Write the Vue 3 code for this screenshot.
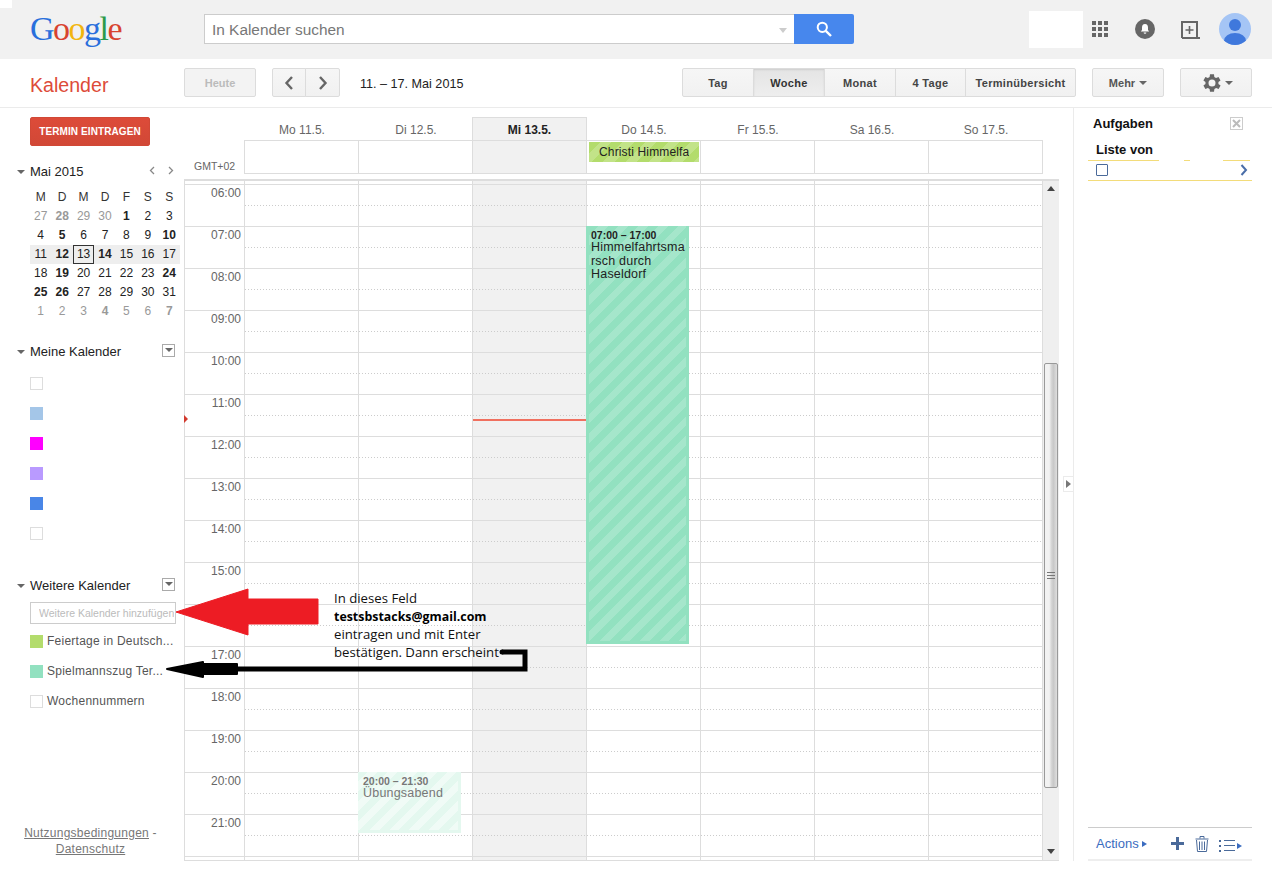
<script setup>
const letters = ['M', 'D', 'M', 'D', 'F', 'S', 'S']
const bold = new Set(['1', '5', '10', '12', '14', '19', '24', '25', '26'])
const mk = (n, cls = '') => ({ n: String(n), cls: cls + (bold.has(String(n)) && cls !== 'mut' ? ' b' : '') })
const mini = [
  [mk(27, 'mut'), { n: '28', cls: 'mut b' }, mk(29, 'mut'), mk(30, 'mut'), mk(1), mk(2), mk(3)],
  [4, 5, 6, 7, 8, 9, 10].map((n) => mk(n)),
  [11, 12, 13, 14, 15, 16, 17].map((n) => mk(n, 'wk')),
  [18, 19, 20, 21, 22, 23, 24].map((n) => mk(n)),
  [25, 26, 27, 28, 29, 30, 31].map((n) => mk(n)),
  [mk(1, 'mut'), mk(2, 'mut'), mk(3, 'mut'), { n: '4', cls: 'mut b' }, mk(5, 'mut'), mk(6, 'mut'), { n: '7', cls: 'mut b' }],
]
const myCals = ['blank', 'c1', 'c2', 'c3', 'c4', 'blank']
const days = ['Mo 11.5.', 'Di 12.5.', 'Mi 13.5.', 'Do 14.5.', 'Fr 15.5.', 'Sa 16.5.', 'So 17.5.']
const hours = ['06:00', '07:00', '08:00', '09:00', '10:00', '11:00', '12:00', '13:00', '14:00', '15:00', '16:00', '17:00', '18:00', '19:00', '20:00', '21:00']
</script>

<template>
  <div class="page">
    <header class="top">
      <div class="logo"><span class="lb">G</span><span class="lr">o</span><span class="ly">o</span><span class="lb">g</span><span class="lg">l</span><span class="lr">e</span></div>
      <div class="search">
        <div class="sfield">
          <span>In Kalender suchen</span>
          <i class="sdrop"></i>
        </div>
        <button class="sbtn">
          <svg width="16" height="16" viewBox="0 0 16 16"><circle cx="6.3" cy="6.3" r="4.6" fill="none" stroke="#fff" stroke-width="2"/><path d="M9.8 9.8 L15 15" stroke="#fff" stroke-width="2.4"/></svg>
        </button>
      </div>
      <div class="tools">
        <div class="mask"></div>
        <svg class="apps" width="16" height="16" viewBox="0 0 16 16" fill="#666"><rect width="4" height="4"/><rect x="6" width="4" height="4"/><rect x="12" width="4" height="4"/><rect y="6" width="4" height="4"/><rect x="6" y="6" width="4" height="4"/><rect x="12" y="6" width="4" height="4"/><rect y="12" width="4" height="4"/><rect x="6" y="12" width="4" height="4"/><rect x="12" y="12" width="4" height="4"/></svg>
        <svg class="bell" width="20" height="20" viewBox="0 0 20 20"><circle cx="10" cy="10" r="10" fill="#666"/><path d="M10 5 C7.8 5 7 6.8 7 8.6 V11 L5.8 12.6 H14.2 L13 11 V8.6 C13 6.8 12.2 5 10 5Z M8.6 13.4 H11.4 A1.4 1.4 0 0 1 8.6 13.4Z" fill="#fff"/></svg>
        <svg class="addbox" width="20" height="20" viewBox="0 0 20 20" fill="none" stroke="#666" stroke-width="2"><path d="M1 18 V2 H16 V18 H1 M16 18 H19"/><path d="M8.5 6 V14 M4.5 10 H12.5" stroke-width="1.6"/></svg>
        <svg class="avatar" width="32" height="32" viewBox="0 0 32 32"><defs><clipPath id="av"><circle cx="16" cy="16" r="16"/></clipPath></defs><circle cx="16" cy="16" r="16" fill="#a5c5f5"/><g clip-path="url(#av)" fill="#3f78dc"><circle cx="16" cy="12" r="6"/><ellipse cx="16" cy="28" rx="11" ry="8"/></g></svg>
      </div>
    </header>

    <div class="bar">
      <div class="brand">Kalender</div>
      <button class="btn heute">Heute</button>
      <div class="group nav">
        <button class="btn"><svg width="10" height="16" viewBox="0 0 10 16"><path d="M8 2 L2.5 8 L8 14" fill="none" stroke="#666" stroke-width="2.4"/></svg></button>
        <button class="btn"><svg width="10" height="16" viewBox="0 0 10 16"><path d="M2 2 L7.5 8 L2 14" fill="none" stroke="#666" stroke-width="2.4"/></svg></button>
      </div>
      <div class="range">11. – 17. Mai 2015</div>
      <div class="group views">
        <button class="btn v1">Tag</button>
        <button class="btn v2 on">Woche</button>
        <button class="btn v3">Monat</button>
        <button class="btn v4">4 Tage</button>
        <button class="btn v5">Terminübersicht</button>
      </div>
      <button class="btn mehr">Mehr <i class="caret"></i></button>
      <button class="btn gear">
        <svg width="24" height="24" viewBox="0 0 24 24"><path fill="#666" d="M19.4 13a7.5 7.5 0 0 0 0-2l2.1-1.6-2-3.5-2.5 1a7.6 7.6 0 0 0-1.7-1L15 3.2h-4l-.4 2.7a7.6 7.6 0 0 0-1.7 1l-2.5-1-2 3.500L6.500 11a7.500 7.500 0 0 0 0 2l-2.100 1.600 2 3.500 2.500-1a7.600 7.600 0 0 0 1.700 1l.4 2.700h4l.4-2.700a7.600 7.600 0 0 0 1.700-1l2.500 1 2-3.500zM13 15.500a3.500 3.500 0 1 1 0-7 3.500 3.500 0 0 1 0 7z"/></svg>
        <i class="caret"></i>
      </button>
    </div>

    <div class="main">
      <aside class="side">
        <button class="create">TERMIN EINTRAGEN</button>

        <div class="mhead">
          <i class="tri"></i><span class="mtitle">Mai 2015</span>
          <svg class="mchev" width="6" height="9" viewBox="0 0 6 9"><path d="M5 1 L1.500 4.500 L5 8" fill="none" stroke="#888" stroke-width="1.300"/></svg>
          <svg class="mchev second" width="6" height="9" viewBox="0 0 6 9"><path d="M1 1 L4.500 4.500 L1 8" fill="none" stroke="#888" stroke-width="1.300"/></svg>
        </div>
        <div class="mini">
          <span v-for="(l, i) in letters" :key="i" class="mcell hd">{{ l }}</span>
          <template v-for="(row, r) in mini" :key="r">
            <span v-for="(d, c) in row" :key="c" class="mcell" :class="[d.cls, d.n === '13' ? 'today' : '']">{{ d.n }}</span>
          </template>
        </div>

        <div class="shead first"><i class="tri"></i><span>Meine Kalender</span><i class="ddbox"></i></div>
        <div class="clist">
          <div v-for="(c, i) in myCals" :key="i" class="citem"><i class="sq" :class="c"></i></div>
        </div>

        <div class="shead second"><i class="tri"></i><span>Weitere Kalender</span><i class="ddbox"></i></div>
        <div class="addcal"><span>Weitere Kalender hinzufügen</span></div>
        <div class="clist other">
          <div class="citem"><i class="sq c5"></i><span>Feiertage in Deutsch...</span></div>
          <div class="citem"><i class="sq c6"></i><span>Spielmannszug Ter...</span></div>
          <div class="citem"><i class="sq blank"></i><span>Wochennummern</span></div>
        </div>

        <div class="legal"><u>Nutzungsbedingungen</u> - <u>Datenschutz</u></div>
      </aside>

      <section class="cal">
        <div class="daysrow">
          <div class="gutter"></div>
          <div v-for="(d, i) in days" :key="d" class="dayhead" :class="{ cur: i === 2 }">{{ d }}</div>
        </div>
        <div class="allday">
          <div class="gutter gmt">GMT+02</div>
          <div v-for="(d, i) in days" :key="d" class="adcell" :class="{ cur: i === 2 }">
            <div v-if="i === 3" class="adevent"><span>Christi Himmelfahrt</span></div>
          </div>
        </div>

        <div class="scrollwrap">
          <div class="grid">
            <div class="timecol">
              <div class="stub"></div>
              <div v-for="h in hours" :key="h" class="tlabel">{{ h }}</div>
              <div class="laststub"></div>
            </div>
            <div v-for="(d, i) in days" :key="d" class="daycol" :class="{ cur: i === 2 }">
              <div class="stub"></div>
              <div v-for="h in hours" :key="h" class="hour"></div>
              <div class="laststub"></div>
              <div v-if="i === 2" class="nowline"></div>
              <div v-if="i === 3" class="event big">
                <div class="etime">07:00 – 17:00</div>
                <div class="etitle">Himmelfahrtsma<br>rsch durch<br>Haseldorf</div>
              </div>
              <div v-if="i === 1" class="event pale">
                <div class="etime">20:00 – 21:30</div>
                <div class="etitle">Übungsabend</div>
              </div>
            </div>
            <i class="nowmark"></i>
          </div>
          <div class="sbar">
            <i class="up"></i>
            <div class="thumb"><b></b></div>
            <i class="down"></i>
          </div>
        </div>
      </section>

      <div class="handle"><i></i></div>

      <aside class="tasks">
        <div class="thead"><span>Aufgaben</span>
          <svg class="tclose" width="13" height="13" viewBox="0 0 13 13"><rect x=".5" y=".5" width="12" height="12" fill="none" stroke="#ccc"/><path d="M3 3 L10 10 M10 3 L3 10" stroke="#bbb" stroke-width="2"/></svg>
        </div>
        <div class="tlist">Liste von</div>
        <div class="trow">
          <i class="tcheck"></i>
          <svg width="8" height="12" viewBox="0 0 8 12"><path d="M1.500 1 L6 6 L1.500 11" fill="none" stroke="#4a6ea9" stroke-width="2"/></svg>
        </div>
        <div class="tspace"></div>
        <div class="tfoot">
          <span class="tact">Actions<i class="play"></i></span>
          <svg class="tplus" width="13" height="13" viewBox="0 0 13 13"><path d="M5 0 H8 V5 H13 V8 H8 V13 H5 V8 H0 V5 H5Z" fill="#4a6a9a"/></svg>
          <svg class="ttrash" width="14" height="16" viewBox="0 0 14 16" fill="none" stroke="#4a6a9a"><path d="M.5 3 H13.500 M5 2.500 V.5 H9 V2.500 M1.500 4 L2.500 15.500 H11.500 L12.500 4"/><path d="M4.500 5.500 V14 M7 5.500 V14 M9.500 5.500 V14"/></svg>
          <span class="tlistic">
            <svg width="16" height="12" viewBox="0 0 16 12" fill="#4a6a9a"><rect y="0" width="2" height="2"/><rect y="5" width="2" height="2"/><rect y="10" width="2" height="2"/><rect x="5" y="0" width="11" height="1"/><rect x="5" y="5" width="11" height="1"/><rect x="5" y="10" width="11" height="1"/></svg>
            <i class="play"></i>
          </span>
        </div>
      </aside>

      <svg class="arrows" width="400" height="110" viewBox="0 0 400 110">
        <path d="M1 34 L73 11 V21 H143 V46 H73 V57 Z" fill="#ed1c24" stroke="#ed1c24"/>
        <path d="M327 74 H350 V91 H60" fill="none" stroke="#000" stroke-width="5"/>
        <circle cx="327" cy="74" r="2.500" fill="#000"/>
        <path d="M-8 91 L28 84 V86 H62 V96 H28 V99 Z" fill="#000" stroke="#000" stroke-width="2" stroke-linejoin="round"/>
      </svg>
      <div class="note">In dieses Feld<br><b>testsbstacks@gmail.com</b><br>eintragen und mit Enter<br>bestätigen. Dann erscheint</div>
    </div>
    <div class="corner"></div>
  </div>
</template>

<style>
html, body { margin: 0; background: #fff; }
</style>

<style scoped>
* { box-sizing: border-box; }
i { display: block; }
.page { position: relative; width: 1272px; height: 889px; overflow: hidden; background: #fff; font-family: "Liberation Sans", Arial, sans-serif; color: #222; font-size: 12px; }
.corner { position: absolute; left: 0; top: 0; width: 12px; height: 8px; background: #fff; }

.top { height: 59px; background: #f1f1f1; display: flex; align-items: flex-start; padding-left: 30px; }
.logo { width: 174px; padding-top: 9px; font-family: "Liberation Serif", serif; font-size: 34px; line-height: 40px; letter-spacing: -1.500px; }
.lb { color: #2a6fdc; } .lr { color: #d8432f; } .ly { color: #f2b50f; } .lg { color: #2d9a4a; }
.search { margin-top: 14px; width: 650px; height: 30px; display: flex; }
.sfield { flex: 1; background: #fff; border: 1px solid #ccc; border-right: 0; display: flex; align-items: center; padding: 2px 8px 0 7px; font-size: 15.400px; color: #777; }
.sfield span { flex: 1; }
.sdrop { width: 0; height: 0; border: 4px solid transparent; border-top: 5px solid #ccc; border-bottom: 0; margin-right: -1px; }
.sbtn { width: 60px; height: 30px; padding: 0; border: 0; border-radius: 0 2px 2px 0; background: #4787ed; display: flex; align-items: center; justify-content: center; }
.tools { margin-left: 175px; height: 59px; position: relative; width: 223px; }
.mask { position: absolute; left: 0; top: 11px; width: 54px; height: 37px; background: #fff; }
.apps { position: absolute; left: 63px; top: 21px; }
.bell { position: absolute; left: 106px; top: 19px; }
.addbox { position: absolute; left: 152px; top: 20px; }
.avatar { position: absolute; left: 190px; top: 13px; }

.bar { height: 49px; border-bottom: 1px solid #ebebeb; display: flex; align-items: flex-start; padding-top: 9px; position: relative; }
.brand { width: 184px; padding-left: 30px; padding-top: 5px; color: #dd4b39; font-size: 19.600px; line-height: 24px; }
.btn { height: 29px; padding: 0; border: 1px solid #dcdcdc; border-radius: 2px; background: linear-gradient(#f6f6f6, #f1f1f1); font: bold 11px "Liberation Sans", Arial, sans-serif; color: #444; display: flex; align-items: center; justify-content: center; gap: 4px; }
.heute { width: 72px; color: #bbb; background: #f3f3f3; }
.group { display: flex; }
.group .btn { border-radius: 0; margin-left: -1px; }
.group .btn:first-child { border-radius: 2px 0 0 2px; margin-left: 0; }
.group .btn:last-child { border-radius: 0 2px 2px 0; }
.nav { margin-left: 16px; }
.nav .btn { width: 34px; }
.nav .btn:last-child { width: 35px; }
.range { margin-left: 20px; width: 322px; padding-top: 2px; line-height: 29px; font-size: 12.600px; color: #222; }
.views .btn { letter-spacing: .3px; }
.v1 { width: 72px; } .v2 { width: 72px; } .v3 { width: 72px; } .v4 { width: 71px; } .v5 { width: 111px; }
.btn.on { background: linear-gradient(#e4e4e4, #eee); box-shadow: inset 0 1px 2px rgba(0,0,0,.1); color: #333; }
.mehr { width: 72px; margin-left: 16px; color: #555; }
.gear { width: 72px; margin-left: 16px; gap: 2px; }
.caret { width: 0; height: 0; border: 4px solid transparent; border-top: 4px solid #666; border-bottom: 0; }

.main { position: relative; display: flex; height: 753px; align-items: flex-start; }
.side { width: 184px; height: 753px; position: relative; padding-top: 9px; flex: none; }
.create { display: block; margin-left: 30px; width: 120px; height: 29px; padding: 0; border: 1px solid #d14836; border-radius: 2px; background: linear-gradient(#dd4b39, #d14836); color: #fff; font: bold 10px "Liberation Sans", Arial, sans-serif; letter-spacing: .1px; }
.tri { width: 0; height: 0; border: 4px solid transparent; border-top: 4px solid #666; border-bottom: 0; }
.mhead { position: relative; display: flex; align-items: center; margin-top: 17px; height: 16px; padding-left: 17px; color: #222; font-size: 13px; }
.mtitle { margin-left: 5px; }
.mhead .tri, .shead .tri { flex: none; margin-top: 2px; }
.mchev { position: absolute; left: 149px; top: 3px; }
.mchev.second { left: 168px; }
.mini { margin: 9px 0 0 30px; width: 150px; display: grid; grid-template-columns: repeat(7, 1fr); grid-auto-rows: 19px; }
.mcell { text-align: center; line-height: 19px; color: #222; position: relative; }
.mcell.hd { color: #333; }
.mcell.mut { color: #999; }
.mcell.b { font-weight: bold; }
.mcell.wk { background: #eee; }
.mcell.today { outline: 1px solid #333; outline-offset: -1px; }
.shead { position: relative; display: flex; align-items: center; height: 16px; padding-left: 17px; color: #222; gap: 5px; font-size: 13px; }
.shead.first { margin-top: 22px; }
.shead.second { margin-top: 29px; }
.ddbox { position: absolute; left: 162px; top: 1px; width: 13px; height: 13px; border: 1px solid #aaa; }
.ddbox::after { content: ""; position: absolute; left: 2px; top: 3px; border: 4px solid transparent; border-top: 4px solid #666; border-bottom: 0; }
.clist { padding-top: 9px; }
.citem { height: 30px; display: flex; align-items: center; padding-left: 30px; gap: 4px; color: #555; letter-spacing: .25px; }
.sq { width: 13px; height: 13px; flex: none; }
.sq.blank { border: 1px solid #ddd; }
.c1 { background: #a4c6e8; } .c2 { background: #f0f; } .c3 { background: #b99aff; } .c4 { background: #4986e7; } .c5 { background: #b3dc6c; } .c6 { background: #92e1c0; }
.addcal { margin: 9px 0 0 30px; width: 146px; height: 22px; border: 1px solid #ccc; padding-left: 8px; overflow: hidden; white-space: nowrap; font-size: 10.500px; line-height: 20px; color: #bbb; }
.addcal span { display: block; width: 135px; overflow: hidden; }
.other { padding-top: 2px; }
.legal { position: absolute; left: 17px; top: 717px; width: 147px; text-align: center; color: #777; line-height: 16px; letter-spacing: .25px; }

.cal { width: 875px; flex: none; position: relative; }
.daysrow, .allday { display: grid; grid-template-columns: 61px repeat(7, 114px); }
.daysrow { padding-top: 9px; height: 32px; }
.dayhead { text-align: center; line-height: 26px; color: #666; height: 23px; }
.dayhead.cur { background: #f1f1f1; color: #222; font-weight: bold; border: 1px solid #ddd; border-bottom: 0; line-height: 24px; margin-left: -1px; }
.allday { height: 34px; }
.adcell { border: 1px solid #ddd; border-left: 0; position: relative; }
.adcell:nth-child(2) { border-left: 1px solid #ddd; margin-left: -1px; }
.adcell.cur { background: #f1f1f1; }
.gmt { font-size: 10.500px; color: #666; padding: 20px 0 0 10px; }
.adevent { position: absolute; left: 2px; top: 1px; width: 110px; height: 20px; padding: 0 10px; background: repeating-linear-gradient(135deg, #b3dc6c 0 8px, #c2e388 8px 16px); line-height: 20px; color: #222; font-size: 12px; letter-spacing: .15px; overflow: hidden; white-space: nowrap; }
.adevent span { display: block; overflow: hidden; }

.scrollwrap { margin-top: 5px; height: 682px; border: 1px solid #ddd; border-width: 2px 0 1px 1px; display: flex; width: 875px; position: relative; }
.grid { position: relative; width: 858px; display: grid; grid-template-columns: 60px repeat(7, 114px); height: 679px; flex: none; }
.stub { height: 4px; border-bottom: 1px solid #ddd; }
.laststub { height: 3px; }
.tlabel { height: 42px; border-bottom: 1px solid #ddd; text-align: right; padding-right: 3px; line-height: 16px; color: #666; }
.timecol { border-right: 1px solid #ddd; }
.daycol { border-right: 1px solid #ddd; position: relative; }
.daycol.cur { background: #f1f1f1; }
.hour { height: 42px; border-bottom: 1px solid #ddd; background: linear-gradient(90deg, #ccc 1px, transparent 1px) 0 20px / 3px 1px repeat-x; }
.nowline { position: absolute; left: 0; right: 0; top: 238px; height: 2px; background: #f0705f; }
.nowmark { position: absolute; left: -1px; top: 234px; border: 4px solid transparent; border-left: 4px solid #d23a2e; border-right: 0; }
.event { position: absolute; overflow: hidden; color: #222; }
.etime { font-size: 10.500px; font-weight: bold; line-height: 12px; margin-top: 1px; }
.etitle { font-size: 12.500px; letter-spacing: .2px; line-height: 13.500px; }
.big { left: -1px; top: 45px; width: 103px; height: 418px; background: repeating-linear-gradient(135deg, #92e1c0 0 7px, #a5e6cb 7px 14px); border: 3px solid #92e1c0; border-top: 0; padding: 2px 1px 2px 2px; }
.pale { left: -1px; top: 591px; width: 103px; height: 61px; padding: 2px 4px 0 5px; background: repeating-linear-gradient(135deg, #e4f8ef 0 7px, #f0fbf6 7px 14px); border: 3px solid #e4f8ef; border-top: 0; border-left: 0; color: #777; }
.pale .etime { color: #777; }

.sbar { width: 16px; height: 679px; background: #efefef; position: relative; flex: none; }
.up, .down { position: absolute; left: 4px; width: 0; height: 0; border: 4px solid transparent; }
.up { top: 5px; border-bottom: 5px solid #444; border-top: 0; }
.down { bottom: 6px; border-top: 5px solid #444; border-bottom: 0; }
.thumb { position: absolute; left: 1px; top: 182px; width: 14px; height: 425px; border: 1px solid #999; border-radius: 2px; background: linear-gradient(90deg, #f2f2f2 0 35%, #d4d4d4 55%, #c8c8c8 70%, #dedede); display: flex; align-items: center; justify-content: center; }
.thumb b { width: 8px; height: 7px; background: repeating-linear-gradient(#777 0 1px, transparent 1px 3px); }

.handle { position: absolute; left: 1063px; top: 368px; width: 10px; height: 16px; border: 1px solid #ebebeb; border-right: 0; background: #fff; display: flex; align-items: center; justify-content: center; }
.handle i { width: 0; height: 0; border: 4px solid transparent; border-left: 5px solid #777; border-right: 0; }
.tasks { position: absolute; left: 1073px; top: 0; width: 199px; height: 753px; border-left: 1px solid #ebebeb; padding-left: 14px; padding-right: 20px; display: flex; flex-direction: column; }
.thead { position: relative; height: 16px; margin-top: 8px; font-weight: bold; font-size: 13px; color: #111; padding-left: 5px; line-height: 16px; }
.tclose { position: absolute; right: 9px; top: 1px; }
.tlist { margin-top: 10px; padding-left: 8px; font-weight: bold; font-size: 13px; height: 19px; line-height: 16px; color: #111; background: linear-gradient(90deg, #f3dc7a 0 71px, transparent 71px 96px, #f3dc7a 96px 102px, transparent 102px 135px, #f3dc7a 135px 162px, transparent 162px) left bottom / 100% 1px no-repeat; }
.trow { height: 20px; border-bottom: 1px solid #f3dc7a; display: flex; align-items: center; justify-content: space-between; padding: 0 4px 1px 8px; }
.tcheck { width: 12px; height: 12px; border: 1px solid #4a6a9a; border-radius: 1px; }
.tspace { height: 646px; }
.tfoot { height: 34px; flex: none; border-top: 1px solid #ccc; border-bottom: 2px solid #eee; display: flex; align-items: center; position: relative; color: #3b6cc0; padding-left: 8px; font-size: 13px; }
.tact { display: flex; align-items: center; gap: 3px; }
.play { width: 0; height: 0; border: 3px solid transparent; border-left: 5px solid #3b6cc0; border-right: 0; }
.tplus { position: absolute; left: 83px; top: 9px; }
.ttrash { position: absolute; left: 107px; top: 8px; }
.tlistic { position: absolute; left: 131px; top: 12px; display: flex; align-items: center; gap: 2px; }

.arrows { position: absolute; left: 175px; top: 470px; overflow: visible; pointer-events: none; }
.note { position: absolute; left: 334px; top: 481px; font-family: "Open Sans", sans-serif; font-size: 13.200px; line-height: 18px; color: #111; white-space: nowrap; }
.note b { color: #000; font-size: 12.400px; line-height: 1; }
</style>
